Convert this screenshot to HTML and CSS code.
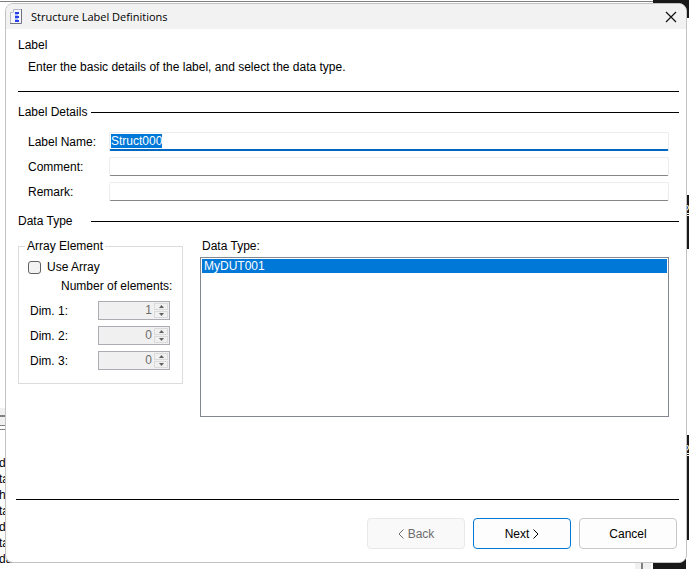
FILE: index.html
```
<!DOCTYPE html>
<html lang="en">

<head>
    <meta charset="UTF-8">
    <meta name="viewport" content="width=device-width, initial-scale=1.0">
    <title>Structure Label Definitions</title>

    <link rel="stylesheet" href="styles.css">
</head>

<body>

    <!-- windows behind the dialog -->
    <div class="backdrop" aria-hidden="true">
        <div class="top-line"></div>
        <div class="dark dark-top"></div>
        <div class="dark dark-middle">2</div>
        <div class="dark dark-lower">2</div>
        <div class="dark dark-bottom"></div>
        <div class="scroll-strip"></div>
        <div class="side-bars"></div>
        <div class="log">
            <p>da</p>
            <p>ta</p>
            <p>h</p>
            <p>ta</p>
            <p>da</p>
            <p>ta</p>
            <p>dataset</p>
        </div>
    </div>

    <form class="dialog">
        <header class="title-bar">
            <svg class="app-icon" width="13" height="15" viewBox="0 0 13 15">
                <path d="M3 1H11V14H1V3H3Z" fill="#f4f6fb"/>
                <path d="M3.5 3V.5H11M.5 14V3.5H3.5" fill="none" stroke="#b4b8c2"/>
                <path d="M11.5 0V14.5H0" fill="none" stroke="#70747e"/>
                <path d="M6.5 3V13" stroke="#a9bbf7" stroke-width="3"/>
                <path d="M5 4H9M5 8H9M5 12H9" stroke="#2440e8" stroke-width="2"/>
            </svg>
            <h1>Structure Label Definitions</h1>
            <button type="button" class="close" aria-label="Close">
                <svg width="12" height="12" viewBox="0 0 12 12">
                    <path d="M1 1L11 11M11 1L1 11" stroke="#111" stroke-width="1.2"/>
                </svg>
            </button>
        </header>

        <div class="intro">
            <h2>Label</h2>
            <p>Enter the basic details of the label, and select the data type.</p>
        </div>

        <h2 class="section-title"><span>Label Details</span></h2>
        <div class="details">
            <label for="label-name">Label Name:</label>
            <input type="text" id="label-name" class="active" value="Struct000">
            <label for="comment">Comment:</label>
            <input type="text" id="comment">
            <label for="remark">Remark:</label>
            <input type="text" id="remark">
        </div>

        <h2 class="section-title"><span>Data Type</span></h2>
        <div class="data-type">
            <fieldset>
                <legend>Array Element</legend>
                <label class="use-array"><input type="checkbox">Use Array</label>
                <p class="count-title">Number of elements:</p>
                <div class="dim">
                    <label for="dim1">Dim. 1:</label>
                    <div class="spinner">
                        <input type="number" id="dim1" value="1" disabled>
                        <div class="arrows">
                            <button type="button" aria-label="Increase" disabled><svg width="5" height="3"><path d="M0 3L2.5 0L5 3Z"/></svg></button>
                            <button type="button" aria-label="Decrease" disabled><svg width="5" height="3"><path d="M0 0H5L2.5 3Z"/></svg></button>
                        </div>
                    </div>
                </div>
                <div class="dim">
                    <label for="dim2">Dim. 2:</label>
                    <div class="spinner">
                        <input type="number" id="dim2" value="0" disabled>
                        <div class="arrows">
                            <button type="button" aria-label="Increase" disabled><svg width="5" height="3"><path d="M0 3L2.5 0L5 3Z"/></svg></button>
                            <button type="button" aria-label="Decrease" disabled><svg width="5" height="3"><path d="M0 0H5L2.5 3Z"/></svg></button>
                        </div>
                    </div>
                </div>
                <div class="dim">
                    <label for="dim3">Dim. 3:</label>
                    <div class="spinner">
                        <input type="number" id="dim3" value="0" disabled>
                        <div class="arrows">
                            <button type="button" aria-label="Increase" disabled><svg width="5" height="3"><path d="M0 3L2.5 0L5 3Z"/></svg></button>
                            <button type="button" aria-label="Decrease" disabled><svg width="5" height="3"><path d="M0 0H5L2.5 3Z"/></svg></button>
                        </div>
                    </div>
                </div>
            </fieldset>

            <div class="type-list">
                <label for="types">Data Type:</label>
                <select id="types" size="10">
                    <option selected>MyDUT001</option>
                </select>
            </div>
        </div>

        <footer>
            <button type="button" disabled>
                <svg width="6" height="10" viewBox="0 0 6 10"><path d="M5.5 .5L1 5L5.5 9.5"/></svg>Back
            </button>
            <button type="button" class="default">
                Next<svg width="6" height="10" viewBox="0 0 6 10"><path d="M.5 .5L5 5L.5 9.5"/></svg>
            </button>
            <button type="button">Cancel</button>
        </footer>
    </form>

    <script>
    const labelName = document.querySelector("#label-name");
    labelName.focus();
    labelName.select();
    </script>

</body>

</html>
```

FILE: styles.css
```
* {
    margin: 0;
    padding: 0;
    box-sizing: border-box;
}

body,
input,
select,
button {
    font-family: "Liberation Sans", Arial, sans-serif;
    font-size: 12px;
    line-height: 14px;
    color: #000;
}

body {
    background: #fff;
    overflow: hidden;
}

h1,
h2 {
    font-size: 12px;
    font-weight: 400;
}

/* windows behind the dialog */
.backdrop {
    position: absolute;
    inset: 0;
    overflow: hidden;
    z-index: -1;
}

.backdrop > div {
    position: absolute;
}

.top-line {
    top: 1px;
    left: 0;
    right: 36px;
    height: 1px;
    background: #808080;
}

.dark {
    right: 0;
    width: 4px;
    background: #191919;
    color: #fff;
    text-indent: -2px;
    text-decoration: underline;
}

.dark-top {
    top: 0;
    width: 36px;
    height: 18px;
}

.dark-middle {
    top: 195px;
    height: 54px;
    padding-top: 8px;
}

.dark-lower {
    top: 435px;
    height: 105px;
    padding-top: 8px;
}

.dark-bottom {
    top: 550px;
    right: 3px;
    width: 33px;
    height: 19px;
}

.scroll-strip {
    top: 550px;
    right: 36px;
    width: 18px;
    height: 19px;
    background: #f0f0f0;
    border-right: 2px solid #fff;
    box-shadow: inset -8px 0 #f0f0f0, inset -10px 0 #808080;
}

.side-bars {
    top: 408px;
    left: 0;
    width: 6px;
    height: 22px;
    background: linear-gradient(#f0f0f0 7px, #808080 7px 9px, #f0f0f0 9px 17px, #808080 17px 18px, #fff 18px 21px, #808080 21px);
}

.log {
    top: 455px;
    left: -1px;
    line-height: 16px;
}

.dialog {
    margin: 3px 2px 0 5px;
    background: #fff;
    border: 1px solid #c3c3c3;
    border-radius: 8px;
    overflow: hidden;
}

.title-bar {
    display: flex;
    align-items: center;
    gap: 8px;
    height: 25px;
    padding: 0 9px 0 4px;
    background: #f2f2f2;
}

.title-bar h1 {
    flex: 1;
    font-family: "Open Sans", sans-serif;
    font-size: 11px;
}

.close {
    display: flex;
    border: 0;
    background: none;
}

.intro {
    margin: 0 7px 0 12px;
    padding: 9px 0 17px;
    border-bottom: 1px solid #000;
}

.intro p {
    margin-top: 8px;
    padding-left: 10px;
}

.section-title {
    display: flex;
    align-items: center;
    margin: 13px 7px 0 12px;
}

.section-title span {
    width: 73px;
}

.section-title::after {
    content: "";
    flex: 1;
    height: 1px;
    background: #000;
}

.details {
    display: grid;
    grid-template-columns: 81px 1fr;
    row-gap: 6px;
    align-items: center;
    margin: 13px 17px 0 22px;
}

.details input {
    width: 100%;
    height: 19px;
    padding: 0 1px 1px;
    border: 1px solid #ececec;
    border-bottom-color: #868686;
    border-radius: 2px;
    outline: none;
    background: #fff;
}

.details .active {
    border-bottom: 2px solid #0067c0;
}

.details input::selection {
    background: #0078d7;
    color: #fff;
}

.data-type {
    display: flex;
    align-items: flex-start;
    gap: 17px;
    margin: 11px 17px 0 12px;
}

fieldset {
    width: 165px;
    min-width: 0;
    padding: 7px 12px 13px 11px;
    border: 1px solid #dcdcdc;
}

legend {
    margin-left: -5px;
    padding: 0 2px;
}

.use-array {
    display: flex;
    align-items: center;
    gap: 6px;
    margin-left: -2px;
}

.use-array input {
    appearance: none;
    width: 13px;
    height: 13px;
    border: 1px solid #626262;
    border-radius: 3px;
    background: #f3f3f3;
}

.count-title {
    margin: 5px 0 8px;
    padding-left: 31px;
    white-space: nowrap;
}

.dim {
    display: flex;
    align-items: center;
    justify-content: space-between;
}

.dim + .dim {
    margin-top: 6px;
}

.spinner {
    display: flex;
    width: 72px;
    height: 19px;
    padding: 1px;
    border: 1px solid #abadb3;
    background: #f0f0f0;
}

.spinner input {
    flex: 1;
    min-width: 0;
    height: 14px;
    padding-right: 2px;
    border: 0;
    background: none;
    color: #6d6d6d;
    text-align: right;
    appearance: textfield;
}

.spinner input::-webkit-inner-spin-button {
    display: none;
}

.arrows {
    display: flex;
    flex-direction: column;
    gap: 1px;
    width: 14px;
}

.arrows button {
    display: flex;
    flex: 1;
    align-items: center;
    justify-content: center;
    border: 1px solid #dadada;
    background: #f0f0f0;
}

.arrows path {
    fill: #606060;
}

.type-list {
    flex: 1;
}

.type-list label {
    display: block;
    padding: 0 0 4px 2px;
}

.type-list select {
    display: block;
    width: 100%;
    height: 160px;
    padding: 1px;
    border: 1px solid #828790;
    border-radius: 0;
    outline: none;
    background: #fff;
}

.type-list option {
    height: 14px;
    min-height: 14px;
    padding: 0 2px;
}

.type-list option:checked {
    background: linear-gradient(#0078d7, #0078d7);
    color: #fff;
    -webkit-text-fill-color: #fff;
}

footer {
    display: flex;
    justify-content: flex-end;
    gap: 8px;
    margin: 82px 7px 0 10px;
    padding: 18px 2px 13px 0;
    border-top: 1px solid #000;
}

footer button {
    display: flex;
    align-items: center;
    justify-content: center;
    gap: 4px;
    width: 98px;
    height: 31px;
    border: 1px solid #c8c8c8;
    border-radius: 4px;
    background: #fdfdfd;
}

footer button:disabled {
    border-color: #e8e8e8;
    background: #f9f9f9;
    color: #6d6d6d;
}

footer .default {
    border-color: #0078d4;
}

footer path {
    fill: none;
    stroke: currentColor;
}
```
